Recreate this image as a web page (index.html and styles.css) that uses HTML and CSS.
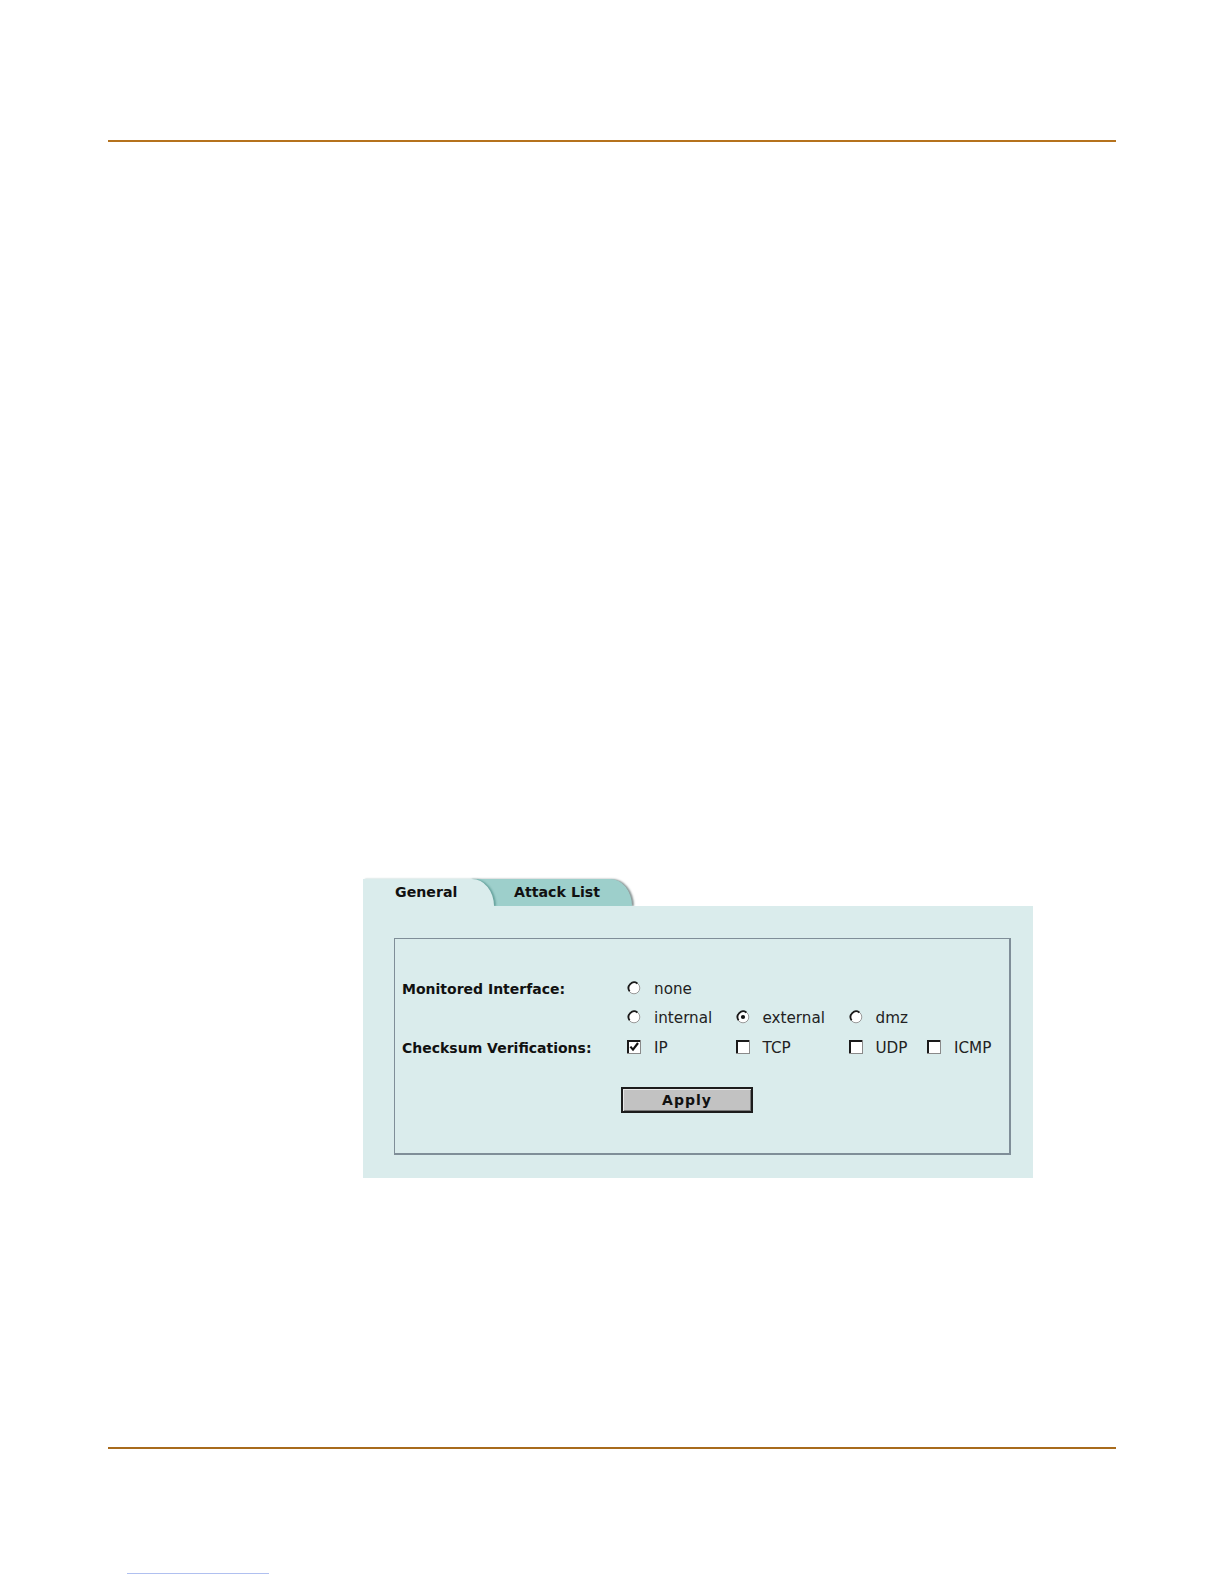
FILE: index.html
```html
<!DOCTYPE html>
<html>
<head>
<meta charset="utf-8">
<link rel="stylesheet" href="styles.css">
</head>
<body>
<div class="page">
  <div class="rule top-rule"></div>
  <div class="panel">
    <div class="tabs">
      <div class="tab tab-active">General</div>
      <div class="tab tab-inactive">Attack List</div>
    </div>
    <div class="panel-body">
      <div class="box">
        <div class="form">
          <div class="label">Monitored Interface:</div>
          <div class="opt"><svg class="ind" width="14" height="14" viewBox="0 0 14 14"><circle cx="7" cy="7" r="5.8" fill="#fff" stroke="#9a9a9a" stroke-width="1"/><path d="M2.6 10.2 A5.6 5.6 0 0 1 10.4 2.4" fill="none" stroke="#1a1a1a" stroke-width="1.8"/></svg><span>none</span></div>
          <div></div><div></div><div></div>

          <div></div>
          <div class="opt"><svg class="ind" width="14" height="14" viewBox="0 0 14 14"><circle cx="7" cy="7" r="5.8" fill="#fff" stroke="#9a9a9a" stroke-width="1"/><path d="M2.6 10.2 A5.6 5.6 0 0 1 10.4 2.4" fill="none" stroke="#1a1a1a" stroke-width="1.8"/></svg><span>internal</span></div>
          <div class="opt"><svg class="ind" width="14" height="14" viewBox="0 0 14 14"><circle cx="7" cy="7" r="5.8" fill="#fff" stroke="#9a9a9a" stroke-width="1"/><path d="M2.6 10.2 A5.6 5.6 0 0 1 10.4 2.4" fill="none" stroke="#1a1a1a" stroke-width="1.8"/><circle cx="7" cy="7" r="2.1" fill="#111"/></svg><span>external</span></div>
          <div class="opt"><svg class="ind" width="14" height="14" viewBox="0 0 14 14"><circle cx="7" cy="7" r="5.8" fill="#fff" stroke="#9a9a9a" stroke-width="1"/><path d="M2.6 10.2 A5.6 5.6 0 0 1 10.4 2.4" fill="none" stroke="#1a1a1a" stroke-width="1.8"/></svg><span>dmz</span></div>
          <div></div>

          <div class="label">Checksum Verifications:</div>
          <div class="opt"><svg class="ind" width="14" height="14" viewBox="0 0 14 14"><rect x="0.5" y="0.5" width="13" height="13" fill="#fff" stroke="#8a8a8a"/><path d="M1 13 V1 H13" fill="none" stroke="#1a1a1a" stroke-width="2"/><path d="M3.4 6.6 L6 9.6 L11 3" fill="none" stroke="#111" stroke-width="2.2"/></svg><span>IP</span></div>
          <div class="opt"><svg class="ind" width="14" height="14" viewBox="0 0 14 14"><rect x="0.5" y="0.5" width="13" height="13" fill="#fff" stroke="#8a8a8a"/><path d="M1 13 V1 H13" fill="none" stroke="#1a1a1a" stroke-width="2"/></svg><span>TCP</span></div>
          <div class="opt"><svg class="ind" width="14" height="14" viewBox="0 0 14 14"><rect x="0.5" y="0.5" width="13" height="13" fill="#fff" stroke="#8a8a8a"/><path d="M1 13 V1 H13" fill="none" stroke="#1a1a1a" stroke-width="2"/></svg><span>UDP</span></div>
          <div class="opt"><svg class="ind" width="14" height="14" viewBox="0 0 14 14"><rect x="0.5" y="0.5" width="13" height="13" fill="#fff" stroke="#8a8a8a"/><path d="M1 13 V1 H13" fill="none" stroke="#1a1a1a" stroke-width="2"/></svg><span>ICMP</span></div>
        </div>
        <div class="actions">
          <button class="apply">Apply</button>
        </div>
      </div>
    </div>
  </div>
  <div class="rule bottom-rule"></div>
  <div class="link-line"></div>
</div>
</body>
</html>
```

FILE: styles.css
```css
html, body {
  margin: 0;
  padding: 0;
  background: #ffffff;
}

.page {
  padding-top: 140px;
  font-family: "DejaVu Sans", Verdana, sans-serif;
  color: #111;
}

.rule {
  margin-left: 108px;
  width: 1008px;
  height: 2px;
  background: #b5721d;
}

.panel {
  margin-top: 737px;
  margin-left: 363px;
  width: 670px;
}

.tabs {
  display: flex;
  height: 27px;
}

.tab {
  height: 27px;
  line-height: 27px;
  font-size: 14.2px;
  font-weight: bold;
  color: #111;
  box-sizing: border-box;
}

.tab-active {
  position: relative;
  z-index: 2;
  width: 131px;
  padding-left: 32px;
  background: #daecec;
  border-top-right-radius: 22px 27px;
  box-shadow: 2px 0 2px rgba(40, 110, 105, 0.45);
}

.tab-inactive {
  position: relative;
  z-index: 1;
  margin-left: -24px;
  width: 162px;
  padding-left: 44px;
  background: #9dcfcb;
  border-top-right-radius: 22px 27px;
  box-shadow: 2px 0 2px rgba(60, 80, 80, 0.6);
}

.panel-body {
  position: relative;
  z-index: 3;
  background: #daecec;
  padding: 32px 22px 23px 31px;
}

.box {
  border: 1px solid #7f8e98;
  border-right-width: 2px;
  border-bottom-width: 2px;
  padding: 35px 0 40px 7px;
}

.form {
  display: grid;
  grid-template-columns: 225px 108.5px 113px 78.5px auto;
  grid-auto-rows: 29.5px;
  align-items: center;
}

.label {
  font-size: 14px;
  font-weight: bold;
  color: #111;
}

.opt {
  display: flex;
  align-items: center;
  font-size: 15.2px;
  color: #222;
}

.ind {
  display: block;
  flex: none;
  margin-right: 13px;
  margin-top: -2px;
}

.actions {
  margin-top: 24.5px;
  padding-left: 219px;
}

.apply {
  display: block;
  width: 132px;
  height: 26px;
  padding: 0;
  margin: 0;
  background: #c2c2c2;
  border: 2px solid #1c1c1c;
  box-shadow: inset 1px 1px 0 #e8e8e8, inset -1px -1px 0 #7a7a7a;
  font-family: "DejaVu Sans", Verdana, sans-serif;
  font-size: 14px;
  font-weight: bold;
  letter-spacing: 1px;
  color: #111;
  line-height: 20px;
}

.bottom-rule {
  margin-top: 269px;
  background: #a86b1c;
}

.link-line {
  margin-top: 124px;
  margin-left: 127px;
  width: 142px;
  height: 1px;
  background: #b0c0f0;
}
```
